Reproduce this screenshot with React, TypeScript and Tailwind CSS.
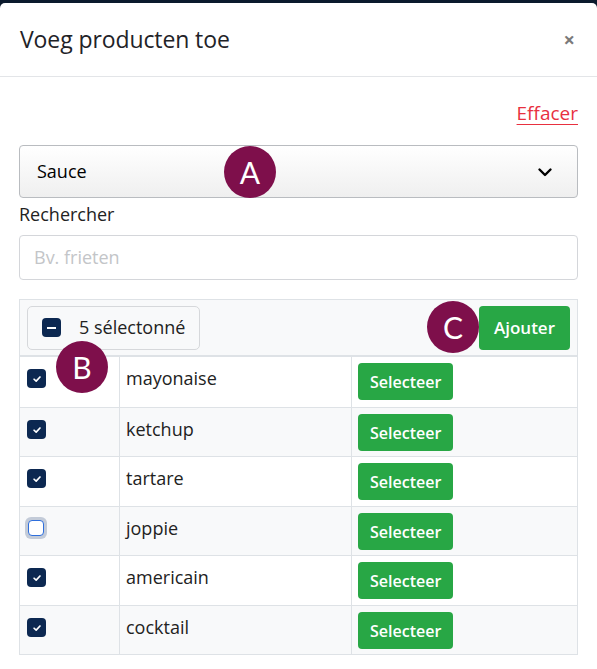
const font = { fontFamily: "'Open Sans', 'Noto Sans', sans-serif" };

const products = [
  { name: "mayonaise", checked: true },
  { name: "ketchup", checked: true },
  { name: "tartare", checked: true },
  { name: "joppie", checked: false },
  { name: "americain", checked: true },
  { name: "cocktail", checked: true },
];

function Marker({ letter }: { letter: string }) {
  return (
    <span
      className="flex h-[52px] w-[52px] items-center justify-center rounded-full bg-[#7e0f4b] text-[30px] leading-none text-white"
      style={{ fontFamily: "Lato, sans-serif" }}
    >
      {letter}
    </span>
  );
}

function Check({ checked }: { checked: boolean }) {
  if (!checked) {
    return (
      <span className="block h-[22px] w-[22px] rounded-[6px] bg-[#c3cbd8] p-[3px]">
        <span className="block h-full w-full rounded-[4px] border border-[#2f6fdc] bg-white" />
      </span>
    );
  }
  return (
    <span className="flex h-[19px] w-[19px] items-center justify-center rounded-[4px] bg-[#0c2851]">
      <svg viewBox="0 0 12 12" className="h-[10px] w-[10px]">
        <path d="M2.5 6.3 L5 8.6 L9.6 3.6" fill="none" stroke="white" strokeWidth="2" strokeLinecap="round" strokeLinejoin="round" />
      </svg>
    </span>
  );
}

export default function App() {
  return (
    <div className="min-h-screen bg-[#0b1a2d] pt-[3px]" style={font}>
      <div className="min-h-[666px] rounded-t-[5px] bg-white">
        {/* Header */}
        <header className="flex h-[74px] items-center justify-between border-b border-[#e3e5e8] px-5">
          <h1 className="text-[23px] tracking-[-0.1px] text-[#1f2328]">Voeg producten toe</h1>
          <span className="mr-[2px] text-[20px] font-bold leading-none text-[#7a7a7a]">×</span>
        </header>

        <div className="px-[19px] pt-[25px]">
          <div className="flex justify-end">
            <a className="text-[19px] leading-[22px] text-[#e8303f] underline underline-offset-[4px]">Effacer</a>
          </div>

          {/* Category select */}
          <div className="relative mt-[21px] flex h-[53px] items-center justify-between rounded-[4px] border border-[#b9bcc0] bg-gradient-to-b from-white to-[#efefef] pl-[17px] pr-[24px]">
            <span className="text-[18px] text-black">Sauce</span>
            <svg viewBox="0 0 16 16" className="h-[16px] w-[16px]">
              <path d="M2.5 5.5 L8 11 L13.5 5.5" fill="none" stroke="black" strokeWidth="2.4" strokeLinecap="round" strokeLinejoin="round" />
            </svg>
            <span className="absolute left-[204px] top-[0px]">
              <Marker letter="A" />
            </span>
          </div>

          <label className="mt-[4px] block text-[18px] leading-[24px] text-[#222]">Rechercher</label>
          <div className="mt-[9px] flex h-[45px] items-center rounded-[4px] border border-[#d4d6da] px-[14px]">
            <span className="text-[18px] text-[#c3c5c8]">Bv. frieten</span>
          </div>

          {/* Table */}
          <div className="mt-[19px] border border-[#dee2e6]">
            <div className="relative flex h-[57px] items-center justify-between border-b-2 border-[#dee2e6] bg-[#f8f9fa] px-[7px]">
              <button className="flex h-[44px] items-center gap-[18px] rounded-[5px] border border-[#d6d8db] px-[14px] text-[18px] text-[#222]">
                <span className="flex h-[19px] w-[19px] items-center justify-center rounded-[4px] bg-[#0c2851]">
                  <span className="block h-[2px] w-[9px] bg-white" />
                </span>
                5 sélectonné
              </button>
              <button className="h-[44px] rounded-[4px] bg-[#28a745] px-[15px] text-[17px] font-semibold text-white">
                Ajouter
              </button>
              <span className="absolute left-[407px] top-[1px]">
                <Marker letter="C" />
              </span>
              <span className="absolute left-[36px] top-[41px] z-10">
                <Marker letter="B" />
              </span>
            </div>
            {products.map((p, i) => (
              <div
                key={p.name}
                className={`flex border-[#dee2e6] ${i % 2 === 0 ? "h-[50px]" : "h-[49px]"} ${i > 0 ? "border-t" : ""} ${i % 2 === 1 ? "bg-[#f8f9fa]" : "bg-white"}`}
              >
                <div className={`w-[100px] border-r border-[#dee2e6] ${p.checked ? "pl-[7px] pt-[12px]" : "pl-[5px] pt-[10px]"}`}>
                  <Check checked={p.checked} />
                </div>
                <div className="flex w-[232px] items-start border-r border-[#dee2e6] pl-[6px] pt-[8px] text-[18px] text-[#222]">
                  {p.name}
                </div>
                <div className="flex-1 pl-[6px] pt-[6px]">
                  <button className="h-[37px] rounded-[4px] bg-[#28a745] px-[12px] text-[16px] font-semibold text-white">
                    Selecteer
                  </button>
                </div>
              </div>
            ))}
          </div>
        </div>
      </div>
    </div>
  );
}
